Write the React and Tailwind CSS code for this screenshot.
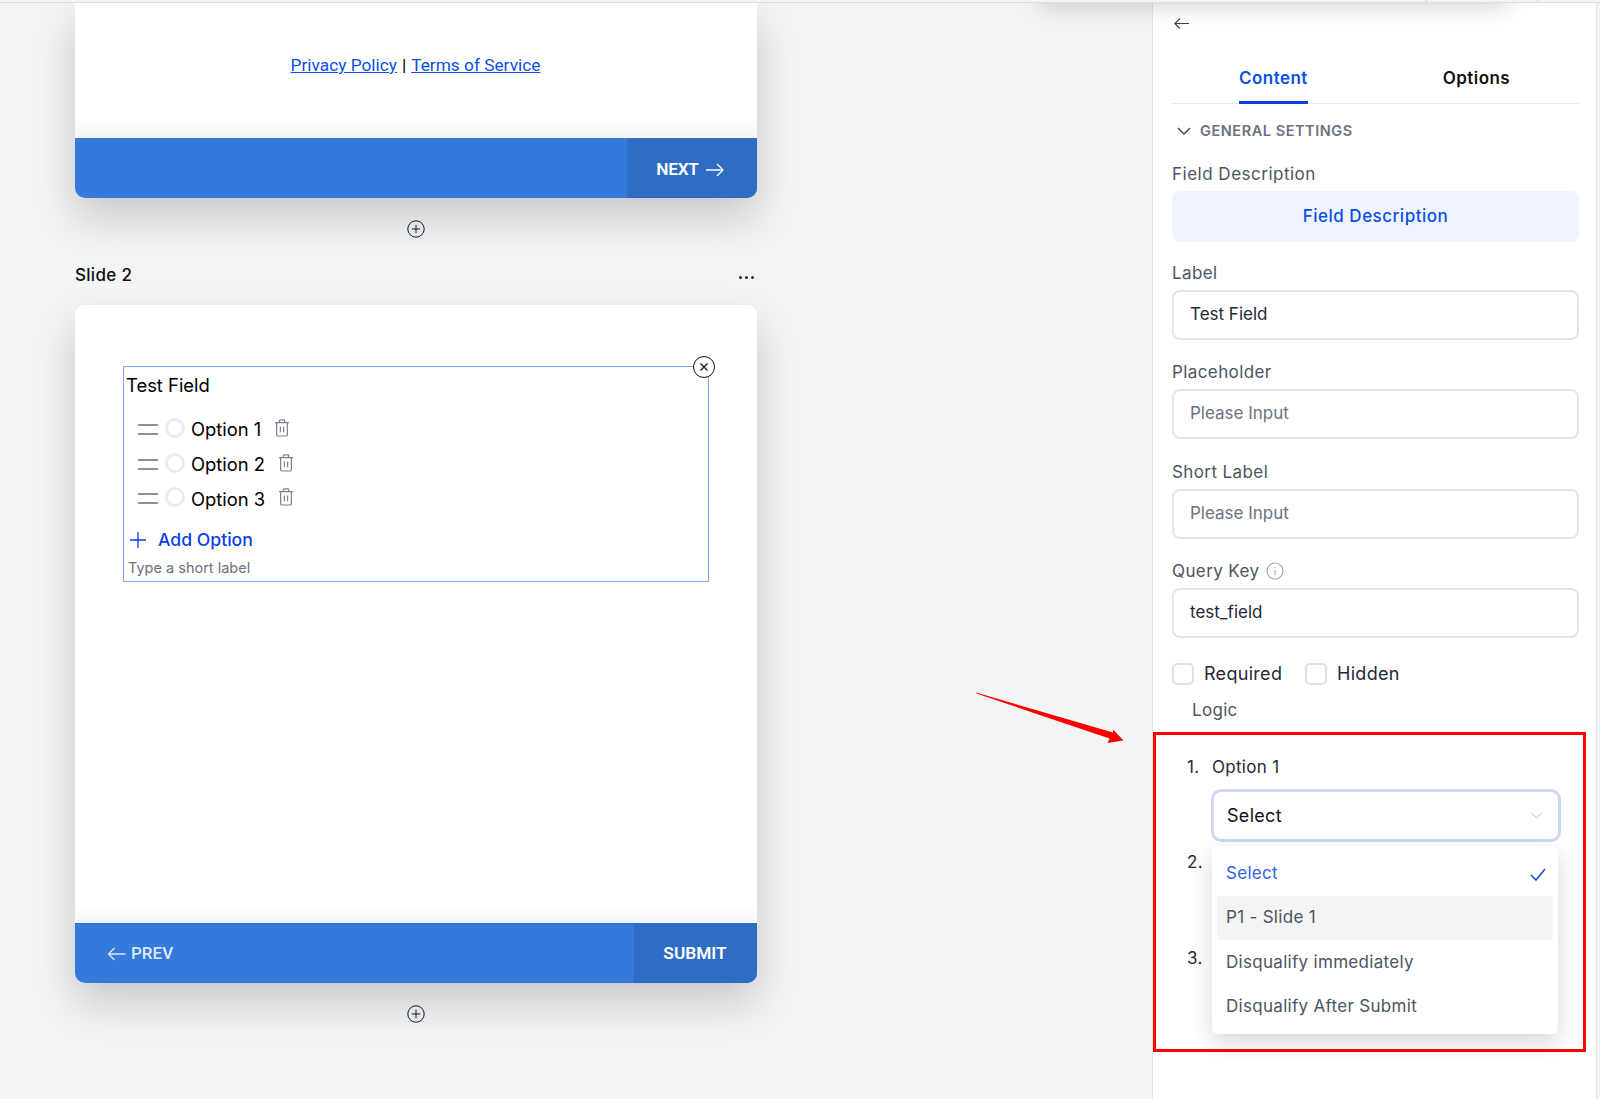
import React from "react";

const Arrow = ({ dir = "right", className = "" }) => (
  <svg viewBox="0 0 18 14" className={className} fill="none" stroke="currentColor" strokeWidth="1.3">
    {dir === "right" ? <path d="M0 7h17M11 1l6 6-6 6" /> : <path d="M18 7H1M7 1L1 7l6 6" />}
  </svg>
);

const PlusCircle = ({ className = "" }) => (
  <svg viewBox="0 0 18 18" className={className} fill="none" stroke="#111827" strokeWidth="1">
    <circle cx="9" cy="9" r="8.2" />
    <path d="M9 4.8v8.4M4.8 9h8.4" />
  </svg>
);

const Trash = ({ className = "" }) => (
  <svg viewBox="0 0 16 18" className={className} fill="none" stroke="#7b8294" strokeWidth="1.2">
    <path d="M1 3.6h14M5.4 3.4V1.6c0-.4.3-.7.7-.7h3.8c.4 0 .7.3.7.7v1.8M2.6 3.8v11.6c0 .9.7 1.6 1.6 1.6h7.6c.9 0 1.6-.7 1.6-1.6V3.8M6.4 7.4v5.8M9.6 7.4v5.8" />
  </svg>
);

const OptionRow = ({ label, gap }) => (
  <div className="flex h-[34.7px] items-center">
    <div className="ml-[12px] flex w-[20px] flex-col gap-[7px]">
      <span className="h-[2px] bg-[#8a90a0]" />
      <span className="h-[2px] bg-[#8a90a0]" />
    </div>
    <span className="ml-[7px] -mt-[3px] h-[20px] w-[20px] rounded-full border-[3px] border-[#e8edf3]" />
    <span className="ml-[6px] text-[18.4px] leading-[34px] text-black">{label}</span>
    <Trash className={`-mt-[3px] h-[18px] w-[16px] ${gap}`} />
  </div>
);

const Field = ({ label, value, muted, info, mt }) => (
  <div className={mt}>
    <div className="flex h-[18px] items-center gap-[7px] text-[17px] leading-[18px] tracking-[0.4px] text-[#4b5563]">
      {label}
      {info && (
        <svg viewBox="0 0 18 18" className="h-[18px] w-[18px]" fill="none" stroke="#9ca3af" strokeWidth="1.1">
          <circle cx="9" cy="9" r="8" />
          <path d="M9 8v5M9 5v1.3" />
        </svg>
      )}
    </div>
    <div
      className={`mt-[8px] flex h-[50px] items-center rounded-[8px] border-2 border-[#e3e5ea] bg-white pl-[16px] text-[17px] ${
        muted ? "text-[#6b7280]" : "text-[#1f2937]"
      }`}
    >
      {value}
    </div>
  </div>
);

const Check = ({ label, width }) => (
  <div className={`flex items-center ${width}`}>
    <span className="h-[22px] w-[22px] rounded-[5px] border-2 border-[#dfe2e8] bg-white" />
    <span className="ml-[10px] text-[18px] leading-[22px] tracking-[0.3px] text-[#1f2937]">{label}</span>
  </div>
);

export default function App() {
  return (
    <div className="relative flex h-[1099px] w-[1600px] flex-col overflow-hidden bg-[#f3f4f6] font-['Inter',sans-serif]">
      {/* browser chrome sliver */}
      <div className="z-20 flex h-[3px] shrink-0 justify-end border-b border-[#dcdde0] bg-[#f4f4f4]">
        <span className="mr-[110px] h-full w-px bg-[#d4d4d4]" />
        <span className="mr-[62px] h-full w-px bg-[#d4d4d4]" />
      </div>

      <div className="flex min-h-0 flex-1">
        {/* Canvas */}
        <div className="w-[1152px] shrink-0 pl-[75px]">
          <div className="w-[682px] rounded-b-[10px] bg-white shadow-[0_20px_40px_rgba(0,0,0,0.18)]">
            <div className="flex h-[135px] items-start justify-center bg-gradient-to-b from-white from-85% to-[#f5f5f5] pt-[50px] pr-[1px] font-['Roboto',sans-serif] text-[17.3px] leading-[24px] text-black">
              <a className="text-[#0b4fe8] underline">Privacy Policy</a>
              <span className="mx-[5px]">|</span>
              <a className="text-[#0b4fe8] underline">Terms of Service</a>
            </div>
            <div className="flex h-[60px] justify-end overflow-hidden rounded-b-[10px] bg-[#3579db]">
              <div className="flex w-[130px] items-center justify-center gap-[7px] bg-[#2f6cc4] pt-[4px] pr-[4px] font-['Roboto',sans-serif] text-[17.3px] font-semibold tracking-[-0.3px] text-white">
                NEXT
                <Arrow className="h-[14px] w-[18px]" />
              </div>
            </div>
          </div>

          <div className="flex w-[682px] justify-center pt-[22px]">
            <PlusCircle className="h-[18px] w-[18px]" />
          </div>

          <div className="mt-[25px] flex h-[26px] w-[682px] items-center justify-between text-[17px] font-medium tracking-[0.3px] text-[#111]">
            <span>Slide 2</span>
            <span className="mr-[3px] mt-[2px] flex gap-[3px]">
              <i className="h-[3px] w-[3px] rounded-full bg-[#1f2937]" />
              <i className="h-[3px] w-[3px] rounded-full bg-[#1f2937]" />
              <i className="h-[3px] w-[3px] rounded-full bg-[#1f2937]" />
            </span>
          </div>

          <div className="mt-[16px] w-[682px] rounded-[10px] bg-white shadow-[0_20px_40px_rgba(0,0,0,0.18)]">
            <div className="h-[618px] rounded-t-[10px] bg-gradient-to-b from-white from-97% to-[#f6f6f6] px-[48px] pt-[61px]">
              <div className="relative h-[216px] w-[586px] border border-[#7fa9f4] pl-[2px]">
                <button className="absolute -right-[7px] -top-[11px] flex h-[22px] w-[22px] items-center justify-center rounded-full border-[1.5px] border-[#111] bg-white">
                  <svg viewBox="0 0 10 10" className="h-[10px] w-[10px]" fill="none" stroke="#111" strokeWidth="1.2">
                    <path d="M1.5 1.5l7 7M8.5 1.5l-7 7" />
                  </svg>
                </button>
                <div className="pt-[5px] text-[18.4px] leading-[26px] text-black">Test Field</div>
                <div className="mt-[14px]">
                  <OptionRow label="Option 1" gap="ml-[13px]" />
                  <OptionRow label="Option 2" gap="ml-[13px]" />
                  <OptionRow label="Option 3" gap="ml-[13px]" />
                </div>
                <div className="mt-[11px] flex h-[26px] items-center pl-[4px]">
                  <svg viewBox="0 0 16 16" className="h-[16px] w-[16px]" fill="none" stroke="#0b3fe6" strokeWidth="1.3">
                    <path d="M8 0v16M0 8h16" />
                  </svg>
                  <span className="ml-[12px] text-[17.6px] font-medium text-[#0b3fe6]">Add Option</span>
                </div>
                <div className="pl-[2px] pt-[6px] text-[14.5px] leading-[18px] text-[#6b7280]">Type a short label</div>
              </div>
            </div>
            <div className="flex h-[60px] items-stretch justify-between overflow-hidden rounded-b-[10px] border-t border-[#1a6fdd] bg-[#3579db]">
              <div className="ml-[32px] flex items-center gap-[5px] font-['Roboto',sans-serif] text-[17px] font-medium text-[#dbe7fb]">
                <Arrow dir="left" className="h-[14px] w-[19px]" />
                PREV
              </div>
              <div className="flex w-[123px] items-center justify-center bg-[#2f6cc4] pr-[1px] font-['Roboto',sans-serif] text-[17.3px] font-semibold text-white">
                SUBMIT
              </div>
            </div>
          </div>

          <div className="flex w-[682px] justify-center pt-[22px]">
            <PlusCircle className="h-[18px] w-[18px]" />
          </div>
        </div>

        {/* Properties panel */}
        <aside className="z-10 w-[445px] shrink-0 border-x border-[#e2e4e8] bg-white pl-[19px] pr-[17px]">
          <div className="pl-[2px] pt-[14px] text-[#374151]">
            <Arrow dir="left" className="h-[13px] w-[15px]" />
          </div>
          <div className="mt-[26px] flex h-[48px] items-start border-b border-[#e8eaee] text-[17px] font-semibold tracking-[0.45px]">
            <div className="ml-[67px] flex h-[48px] flex-col items-center border-b-[3px] border-[#0b3fe6] pt-[10px] text-[#0b4fe8]">
              Content
            </div>
            <div className="ml-[135px] pt-[10px] text-[#111]">Options</div>
          </div>
          <div className="mt-[17px] flex h-[20px] items-center pl-[5px] text-[14.5px] font-semibold tracking-[0.55px] text-[#6b7280]">
            <svg viewBox="0 0 14 8" className="h-[8px] w-[14px]" fill="none" stroke="#374151" strokeWidth="1.3">
              <path d="M1 1l6 6 6-6" />
            </svg>
            <span className="ml-[9px]">GENERAL SETTINGS</span>
          </div>
          <div className="mt-[24px] h-[18px] text-[17px] leading-[18px] tracking-[0.5px] text-[#4b5563]">Field Description</div>
          <div className="mt-[8px] flex h-[51px] items-center justify-center rounded-[8px] bg-[#eff4fe] text-[17px] font-medium tracking-[0.5px] text-[#0b4fe8]">
            Field Description
          </div>
          <Field label="Label" value="Test Field" mt="mt-[22px]" />
          <Field label="Placeholder" value="Please Input" muted mt="mt-[23px]" />
          <Field label="Short Label" value="Please Input" muted mt="mt-[24px]" />
          <Field label="Query Key" value="test_field" info mt="mt-[23px]" />
          <div className="mt-[25px] flex">
            <Check label="Required" width="w-[133px]" />
            <Check label="Hidden" width="" />
          </div>
          <div className="mt-[14px] pl-[20px] text-[17px] leading-[22px] tracking-[0.3px] text-[#4b5563]">Logic</div>

          <div className="relative mt-[36px] pl-[15px]">
            <div className="flex h-[22px] items-center text-[17px] tracking-[0.3px] text-[#1f2937]">
              <span className="w-[25px]">1.</span>
              Option 1
            </div>
            <div className="ml-[24px] mt-[10px] flex h-[53px] w-[350px] items-center justify-between rounded-[10px] border-[3px] border-[#cdd8f3] bg-white pl-[13px] pr-[15px] text-[18px] tracking-[0.3px] text-[#111]">
              <span>Select</span>
              <svg viewBox="0 0 14 8" className="h-[7px] w-[13px]" fill="none" stroke="#b6bbc4" strokeWidth="1.1">
                <path d="M1 1l6 6 6-6" />
              </svg>
            </div>
            <div className="mt-[8px] h-[22px] text-[17px] tracking-[0.3px] text-[#1f2937]">2.</div>
            <div className="mt-[74px] h-[22px] text-[17px] tracking-[0.3px] text-[#1f2937]">3.</div>

            <div className="absolute left-[40px] top-[89px] w-[346px] rounded-[6px] bg-white px-[5px] py-[5px] text-[17px] tracking-[0.3px] text-[#4b5563] shadow-[0_8px_24px_rgba(0,0,0,0.16)]">
              <div className="flex h-[44.6px] items-center justify-between pl-[9px] pr-[7px] text-[#2f5fe8]">
                Select
                <svg viewBox="0 0 16 13" className="mt-[3px] h-[13px] w-[16px]" fill="none" stroke="#1d4fd8" strokeWidth="1.6">
                  <path d="M1 7l5 5L15 1" />
                </svg>
              </div>
              <div className="flex h-[44.6px] items-center rounded-[3px] bg-[#f3f4f6] pl-[9px]">P1 - Slide 1</div>
              <div className="flex h-[44.6px] items-center pl-[9px]">Disqualify immediately</div>
              <div className="flex h-[44.6px] items-center pl-[9px]">Disqualify After Submit</div>
            </div>
          </div>
        </aside>
      </div>

      {/* soft shadow of a popover sitting above the visible area */}
      <div className="pointer-events-none absolute left-[1040px] top-[-40px] z-10 h-[40px] w-[470px] shadow-[0_6px_24px_rgba(0,0,0,0.18)]" />

      {/* annotation overlays */}
      <div className="pointer-events-none absolute left-[1153px] top-[732px] z-30 h-[320px] w-[433px] border-[3px] border-[#ff0000]" />
      <svg className="pointer-events-none absolute left-[970px] top-[685px] z-30 h-[65px] w-[160px]" viewBox="0 0 160 65" fill="#ff0000">
        <path d="M6 7.5 L7 8.7 L139.5 53.5 L137.5 58 L153.5 55.5 L143 44.5 L143 47.5 Z" />
      </svg>
    </div>
  );
}
